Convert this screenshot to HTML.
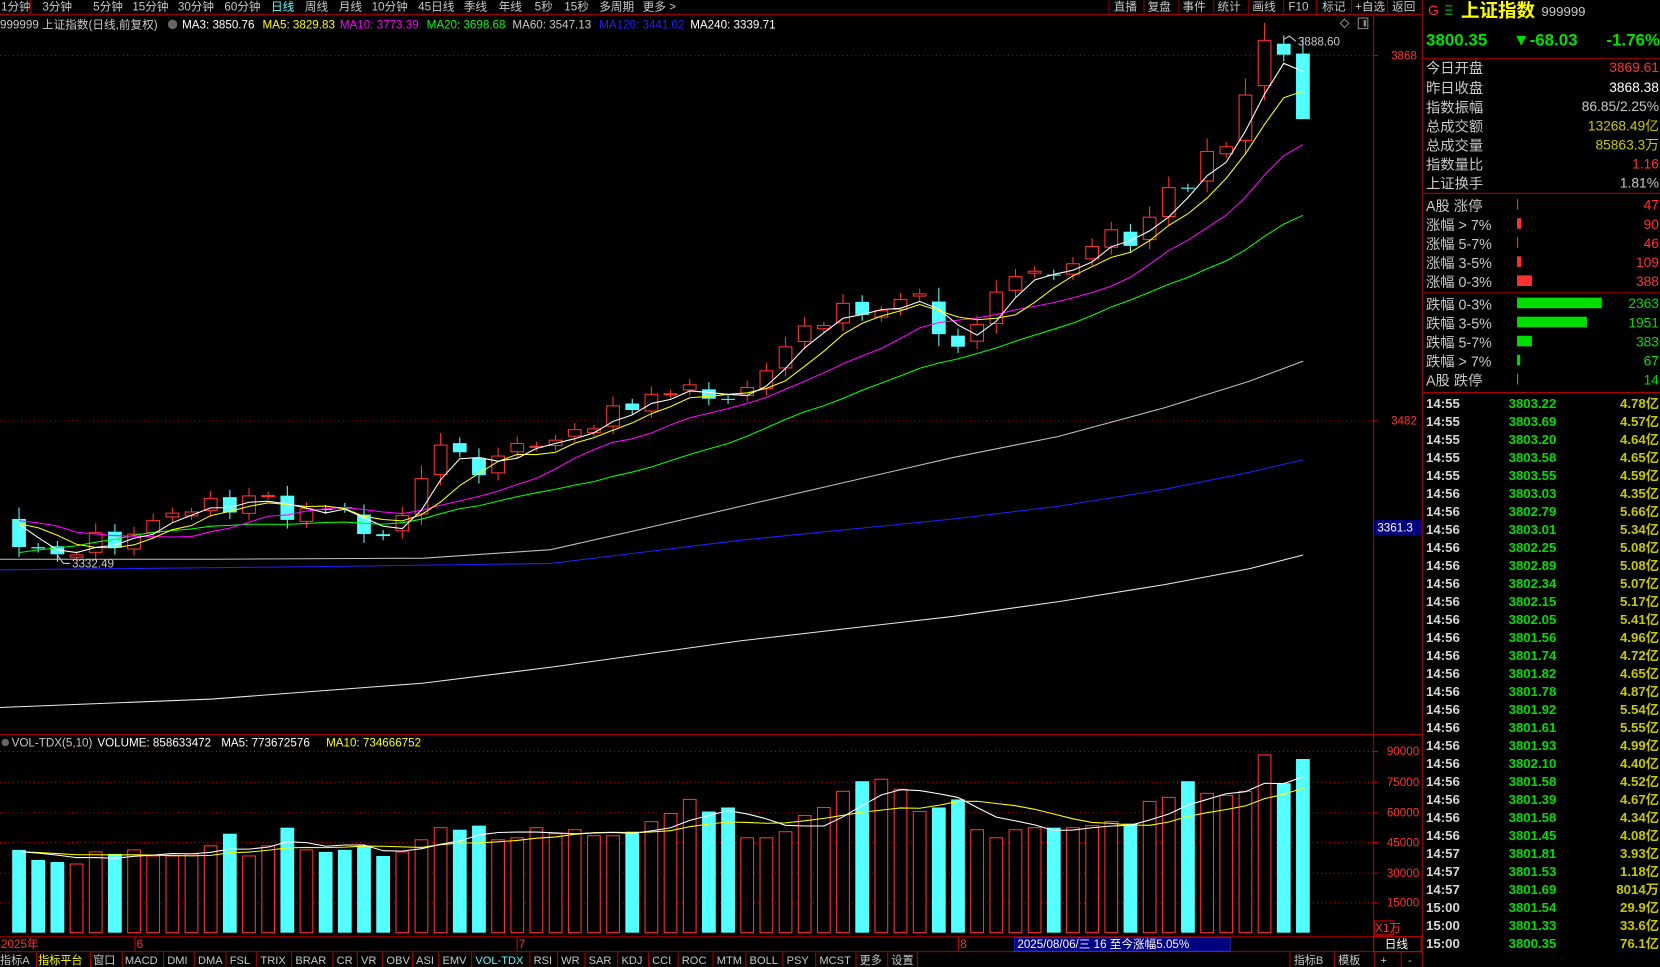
<!DOCTYPE html>
<html><head><meta charset="utf-8">
<style>
html,body{margin:0;padding:0;background:#000;overflow:hidden}
svg{display:block}
text{font-family:"Liberation Sans","Noto Sans CJK SC",sans-serif}
</style></head><body>
<svg id="s" width="1660" height="967" viewBox="0 0 1568 913" preserveAspectRatio="none" xmlns="http://www.w3.org/2000/svg">
<rect width="1568" height="913" fill="#000"/>
<g stroke="#a00" stroke-width="1" fill="none">
<line x1="0" y1="13.5" x2="1343" y2="13.5"/>
<line x1="1297.5" y1="13" x2="1297.5" y2="898"/>
<line x1="1343.5" y1="0" x2="1343.5" y2="913"/>
<line x1="0" y1="693.5" x2="1343" y2="693.5"/>
<line x1="0" y1="884.5" x2="1343" y2="884.5"/>
<line x1="0" y1="898.5" x2="1343" y2="898.5"/>
<line x1="1344" y1="55.5" x2="1568" y2="55.5"/>
<line x1="1344" y1="182.5" x2="1568" y2="182.5"/>
<line x1="1344" y1="276.5" x2="1568" y2="276.5"/>
<line x1="1344" y1="370.5" x2="1568" y2="370.5"/>
</g>
<g stroke="#c00" stroke-dasharray="1,3">
<line x1="0" y1="52.5" x2="1297" y2="52.5"/>
<line x1="0" y1="397.5" x2="1297" y2="397.5"/>
<line x1="0" y1="709.5" x2="1297" y2="709.5"/>
<line x1="0" y1="738.5" x2="1297" y2="738.5"/>
<line x1="0" y1="767.5" x2="1297" y2="767.5"/>
<line x1="0" y1="795.5" x2="1297" y2="795.5"/>
<line x1="0" y1="824.5" x2="1297" y2="824.5"/>
<line x1="0" y1="852.5" x2="1297" y2="852.5"/>
</g>
<g stroke="#c00">
<line x1="1297" y1="52.5" x2="1302" y2="52.5"/><line x1="1297" y1="397.5" x2="1302" y2="397.5"/>
<line x1="1297" y1="709.5" x2="1302" y2="709.5"/><line x1="1297" y1="738.5" x2="1302" y2="738.5"/>
<line x1="1297" y1="767.5" x2="1302" y2="767.5"/><line x1="1297" y1="795.5" x2="1302" y2="795.5"/>
<line x1="1297" y1="824.5" x2="1302" y2="824.5"/><line x1="1297" y1="852.5" x2="1302" y2="852.5"/>
</g>
<g id="ch"></g>

<g font-size="11" fill="#c8c8c8">
<text x="1" y="10">1分钟</text><text x="40" y="10">3分钟</text>
<text x="88" y="10">5分钟</text><text x="125" y="10">15分钟</text><text x="168" y="10">30分钟</text>
<text x="212" y="10">60分钟</text><text x="256" y="10" fill="#54ffff">日线</text><text x="288" y="10">周线</text>
<text x="320" y="10">月线</text><text x="351" y="10">10分钟</text><text x="395" y="10">45日线</text>
<text x="438" y="10">季线</text><text x="471" y="10">年线</text><text x="505" y="10">5秒</text>
<text x="533" y="10">15秒</text><text x="566" y="10">多周期</text><text x="607" y="10">更多 &gt;</text>
<text x="1052" y="10">直播</text><text x="1084" y="10">复盘</text><text x="1117" y="10">事件</text>
<text x="1150" y="10">统计</text><text x="1183" y="10">画线</text><text x="1217" y="10">F10</text>
<text x="1249" y="10">标记</text><text x="1280" y="10">+自选</text><text x="1315" y="10">返回</text>
</g>
<g stroke="#800"><line x1="1047.5" y1="0" x2="1047.5" y2="13"/><line x1="1080.5" y1="0" x2="1080.5" y2="13"/><line x1="1113.5" y1="0" x2="1113.5" y2="13"/><line x1="1146.5" y1="0" x2="1146.5" y2="13"/><line x1="1179.5" y1="0" x2="1179.5" y2="13"/><line x1="1212.5" y1="0" x2="1212.5" y2="13"/><line x1="1243.5" y1="0" x2="1243.5" y2="13"/><line x1="1276.5" y1="0" x2="1276.5" y2="13"/><line x1="1310.5" y1="0" x2="1310.5" y2="13"/><line x1="28.5" y1="0" x2="28.5" y2="13" stroke="#c00"/></g>

<g font-size="11" fill="#c8c8c8">
<text x="0" y="27">999999 上证指数(日线,前复权)</text>
<circle cx="163" cy="23" r="4.5" fill="#666"/>
<text x="172" y="27" fill="#fff">MA3: 3850.76</text>
<text x="248" y="27" fill="#ffff00">MA5: 3829.83</text>
<text x="321" y="27" fill="#ff00ff">MA10: 3773.39</text>
<text x="403" y="27" fill="#00ff00">MA20: 3698.68</text>
<text x="484" y="27" fill="#c8c8c8">MA60: 3547.13</text>
<text x="566" y="27" fill="#2020ff">MA120: 3441.02</text>
<text x="652" y="27" fill="#fff">MA240: 3339.71</text>
</g>
<path d="M1270 18 L1274 22 L1270 26 L1266 22 Z" fill="none" stroke="#888"/>
<rect x="1283" y="17" width="9" height="10" fill="none" stroke="#888"/><rect x="1288" y="19" width="2.5" height="6" fill="#888"/>

<g font-size="11" fill="#ff3232">
<text x="1314" y="56">3868</text><text x="1314" y="401">3482</text>
<text x="1310" y="713">90000</text><text x="1310" y="742">75000</text><text x="1310" y="771">60000</text>
<text x="1310" y="799">45000</text><text x="1310" y="828">30000</text><text x="1310" y="856">15000</text>
</g>
<rect x="1298" y="491" width="45" height="14" fill="#000080"/>
<text x="1301" y="502" font-size="11" fill="#fff">3361.3</text>
<rect x="1298.5" y="869.5" width="18" height="13" fill="none" stroke="#c00"/>
<text x="1299" y="880" font-size="11" fill="#ff3232">X1万</text>

<g font-size="11" fill="#c8c8c8">
<text x="1226" y="43">3888.60</text>
<text x="68" y="536">3332.49</text>
</g>
<path d="M1213 37 L1218 34 L1224 39" stroke="#c8c8c8" fill="none"/>
<path d="M54 524 L60 532 L66 532" stroke="#c8c8c8" fill="none"/>

<g font-size="11">
<circle cx="5" cy="701" r="3.5" fill="#666"/>
<text x="11" y="705" fill="#c8c8c8">VOL-TDX(5,10)</text>
<text x="92" y="705" fill="#fff">VOLUME: 858633472</text>
<text x="209" y="705" fill="#fff">MA5: 773672576</text>
<text x="308" y="705" fill="#ffff00">MA10: 734666752</text>
</g>

<g font-size="11" fill="#ff3232">
<text x="1" y="895">2025年</text><text x="129" y="895">6</text><text x="490" y="895">7</text><text x="907" y="895">8</text>
</g>
<g stroke="#c00"><line x1="127.5" y1="885" x2="127.5" y2="898"/><line x1="488.5" y1="885" x2="488.5" y2="898"/><line x1="905.5" y1="885" x2="905.5" y2="898"/></g>
<rect x="958" y="885" width="204" height="13" fill="#000080" stroke="#44f" stroke-width="0.5"/>
<text x="961" y="895" font-size="11" fill="#fff">2025/08/06/三 16 至今涨幅5.05%</text>
<rect x="1297.5" y="884.5" width="45" height="14" fill="none" stroke="#c00"/>
<text x="1308" y="895" font-size="11" fill="#fff">日线</text>

<g font-size="10.5" fill="#c8c8c8">
<text x="0" y="910">指标A</text><text x="36" y="910" fill="#ffff00">指标平台</text><text x="88" y="910">窗口</text>
<text x="118" y="910">MACD</text><text x="158" y="910">DMI</text><text x="187" y="910">DMA</text>
<text x="217" y="910">FSL</text><text x="246" y="910">TRIX</text><text x="279" y="910">BRAR</text>
<text x="318" y="910">CR</text><text x="341" y="910">VR</text><text x="365" y="910">OBV</text>
<text x="393" y="910">ASI</text><text x="418" y="910">EMV</text><text x="449" y="910" fill="#54ffff">VOL-TDX</text>
<text x="504" y="910">RSI</text><text x="530" y="910">WR</text><text x="556" y="910">SAR</text>
<text x="587" y="910">KDJ</text><text x="616" y="910">CCI</text><text x="644" y="910">ROC</text>
<text x="677" y="910">MTM</text><text x="708" y="910">BOLL</text><text x="743" y="910">PSY</text>
<text x="774" y="910">MCST</text><text x="812" y="910">更多</text><text x="842" y="910">设置</text>
<text x="1222" y="910">指标B</text><text x="1264" y="910">模板</text><text x="1304" y="910">+</text><text x="1330" y="910">-</text>
</g>
<g stroke="#a00" id="sep"></g>

<text x="1349" y="14" font-size="13" fill="#ff3232">G</text>
<g stroke="#00cc00"><line x1="1365" y1="5.5" x2="1372" y2="5.5"/><line x1="1365" y1="9.5" x2="1372" y2="9.5"/><line x1="1365" y1="13.5" x2="1372" y2="13.5"/></g>
<text x="1380" y="16" font-size="17.5" fill="#ffff00" font-weight="bold" textLength="70">上证指数</text>
<text x="1456" y="15" font-size="12.5" fill="#c8c8c8">999999</text>
<g font-size="16" font-weight="bold" fill="#00e000">
<text x="1347" y="43">3800.35</text>
<text x="1429" y="43">▼-68.03</text>
<text x="1568" y="43" text-anchor="end">-1.76%</text>
</g>
<g font-size="13.5" fill="#c8c8c8">
<text x="1347" y="69">今日开盘</text><text x="1347" y="88">昨日收盘</text><text x="1347" y="106">指数振幅</text>
<text x="1347" y="124">总成交额</text><text x="1347" y="142">总成交量</text><text x="1347" y="160">指数量比</text>
<text x="1347" y="178">上证换手</text>
</g>
<g font-size="13" text-anchor="end">
<text x="1567" y="68" fill="#ff3232">3869.61</text><text x="1567" y="87" fill="#fff">3868.38</text>
<text x="1567" y="105" fill="#c8c8c8">86.85/2.25%</text><text x="1567" y="123" fill="#c8c800">13268.49亿</text>
<text x="1567" y="141" fill="#c8c800">85863.3万</text><text x="1567" y="159" fill="#ff3232">1.16</text>
<text x="1567" y="177" fill="#c8c8c8">1.81%</text>
</g>
<g font-size="13.5" fill="#c8c8c8">
<text x="1347" y="199">A股 涨停</text><text x="1347" y="217">涨幅 &gt; 7%</text><text x="1347" y="235">涨幅 5-7%</text>
<text x="1347" y="253">涨幅 3-5%</text><text x="1347" y="271">涨幅 0-3%</text>
<text x="1347" y="292">跌幅 0-3%</text><text x="1347" y="310">跌幅 3-5%</text><text x="1347" y="328">跌幅 5-7%</text>
<text x="1347" y="346">跌幅 &gt; 7%</text><text x="1347" y="364">A股 跌停</text>
</g>
<g fill="#ff3232">
<rect x="1433" y="188" width="1" height="10"/><rect x="1433" y="206" width="4" height="10"/>
<rect x="1433" y="224" width="1" height="10"/><rect x="1433" y="242" width="4" height="10"/>
<rect x="1433" y="260" width="14" height="10"/>
</g>
<g fill="#00dd00">
<rect x="1433" y="281" width="80" height="10"/><rect x="1433" y="299" width="66" height="10"/>
<rect x="1433" y="317" width="14" height="10"/><rect x="1433" y="335" width="3" height="10"/>
<rect x="1433" y="353" width="1" height="10"/>
</g>
<g font-size="13" text-anchor="end">
<text x="1567" y="198" fill="#ff3232">47</text><text x="1567" y="216" fill="#ff3232">90</text>
<text x="1567" y="234" fill="#ff3232">46</text><text x="1567" y="252" fill="#ff3232">109</text>
<text x="1567" y="270" fill="#ff3232">388</text>
<text x="1567" y="291" fill="#00dd00">2363</text><text x="1567" y="309" fill="#00dd00">1951</text>
<text x="1567" y="327" fill="#00dd00">383</text><text x="1567" y="345" fill="#00dd00">67</text>
<text x="1567" y="363" fill="#00dd00">14</text>
</g>
<g id="ticks" font-size="12.5" font-weight="bold">
<text x="1347" y="385" fill="#d8d8d8">14:55</text><text x="1425" y="385" fill="#00dd00">3803.22</text><text x="1567" y="385" fill="#c8c800" text-anchor="end">4.78亿</text>
<text x="1347" y="402" fill="#d8d8d8">14:55</text><text x="1425" y="402" fill="#00dd00">3803.69</text><text x="1567" y="402" fill="#c8c800" text-anchor="end">4.57亿</text>
<text x="1347" y="419" fill="#d8d8d8">14:55</text><text x="1425" y="419" fill="#00dd00">3803.20</text><text x="1567" y="419" fill="#c8c800" text-anchor="end">4.64亿</text>
<text x="1347" y="436" fill="#d8d8d8">14:55</text><text x="1425" y="436" fill="#00dd00">3803.58</text><text x="1567" y="436" fill="#c8c800" text-anchor="end">4.65亿</text>
<text x="1347" y="453" fill="#d8d8d8">14:55</text><text x="1425" y="453" fill="#00dd00">3803.55</text><text x="1567" y="453" fill="#c8c800" text-anchor="end">4.59亿</text>
<text x="1347" y="470" fill="#d8d8d8">14:56</text><text x="1425" y="470" fill="#00dd00">3803.03</text><text x="1567" y="470" fill="#c8c800" text-anchor="end">4.35亿</text>
<text x="1347" y="487" fill="#d8d8d8">14:56</text><text x="1425" y="487" fill="#00dd00">3802.79</text><text x="1567" y="487" fill="#c8c800" text-anchor="end">5.66亿</text>
<text x="1347" y="504" fill="#d8d8d8">14:56</text><text x="1425" y="504" fill="#00dd00">3803.01</text><text x="1567" y="504" fill="#c8c800" text-anchor="end">5.34亿</text>
<text x="1347" y="521" fill="#d8d8d8">14:56</text><text x="1425" y="521" fill="#00dd00">3802.25</text><text x="1567" y="521" fill="#c8c800" text-anchor="end">5.08亿</text>
<text x="1347" y="538" fill="#d8d8d8">14:56</text><text x="1425" y="538" fill="#00dd00">3802.89</text><text x="1567" y="538" fill="#c8c800" text-anchor="end">5.08亿</text>
<text x="1347" y="555" fill="#d8d8d8">14:56</text><text x="1425" y="555" fill="#00dd00">3802.34</text><text x="1567" y="555" fill="#c8c800" text-anchor="end">5.07亿</text>
<text x="1347" y="572" fill="#d8d8d8">14:56</text><text x="1425" y="572" fill="#00dd00">3802.15</text><text x="1567" y="572" fill="#c8c800" text-anchor="end">5.17亿</text>
<text x="1347" y="589" fill="#d8d8d8">14:56</text><text x="1425" y="589" fill="#00dd00">3802.05</text><text x="1567" y="589" fill="#c8c800" text-anchor="end">5.41亿</text>
<text x="1347" y="606" fill="#d8d8d8">14:56</text><text x="1425" y="606" fill="#00dd00">3801.56</text><text x="1567" y="606" fill="#c8c800" text-anchor="end">4.96亿</text>
<text x="1347" y="623" fill="#d8d8d8">14:56</text><text x="1425" y="623" fill="#00dd00">3801.74</text><text x="1567" y="623" fill="#c8c800" text-anchor="end">4.72亿</text>
<text x="1347" y="640" fill="#d8d8d8">14:56</text><text x="1425" y="640" fill="#00dd00">3801.82</text><text x="1567" y="640" fill="#c8c800" text-anchor="end">4.65亿</text>
<text x="1347" y="657" fill="#d8d8d8">14:56</text><text x="1425" y="657" fill="#00dd00">3801.78</text><text x="1567" y="657" fill="#c8c800" text-anchor="end">4.87亿</text>
<text x="1347" y="674" fill="#d8d8d8">14:56</text><text x="1425" y="674" fill="#00dd00">3801.92</text><text x="1567" y="674" fill="#c8c800" text-anchor="end">5.54亿</text>
<text x="1347" y="691" fill="#d8d8d8">14:56</text><text x="1425" y="691" fill="#00dd00">3801.61</text><text x="1567" y="691" fill="#c8c800" text-anchor="end">5.55亿</text>
<text x="1347" y="708" fill="#d8d8d8">14:56</text><text x="1425" y="708" fill="#00dd00">3801.93</text><text x="1567" y="708" fill="#c8c800" text-anchor="end">4.99亿</text>
<text x="1347" y="725" fill="#d8d8d8">14:56</text><text x="1425" y="725" fill="#00dd00">3802.10</text><text x="1567" y="725" fill="#c8c800" text-anchor="end">4.40亿</text>
<text x="1347" y="742" fill="#d8d8d8">14:56</text><text x="1425" y="742" fill="#00dd00">3801.58</text><text x="1567" y="742" fill="#c8c800" text-anchor="end">4.52亿</text>
<text x="1347" y="759" fill="#d8d8d8">14:56</text><text x="1425" y="759" fill="#00dd00">3801.39</text><text x="1567" y="759" fill="#c8c800" text-anchor="end">4.67亿</text>
<text x="1347" y="776" fill="#d8d8d8">14:56</text><text x="1425" y="776" fill="#00dd00">3801.58</text><text x="1567" y="776" fill="#c8c800" text-anchor="end">4.34亿</text>
<text x="1347" y="793" fill="#d8d8d8">14:56</text><text x="1425" y="793" fill="#00dd00">3801.45</text><text x="1567" y="793" fill="#c8c800" text-anchor="end">4.08亿</text>
<text x="1347" y="810" fill="#d8d8d8">14:57</text><text x="1425" y="810" fill="#00dd00">3801.81</text><text x="1567" y="810" fill="#c8c800" text-anchor="end">3.93亿</text>
<text x="1347" y="827" fill="#d8d8d8">14:57</text><text x="1425" y="827" fill="#00dd00">3801.53</text><text x="1567" y="827" fill="#c8c800" text-anchor="end">1.18亿</text>
<text x="1347" y="844" fill="#d8d8d8">14:57</text><text x="1425" y="844" fill="#00dd00">3801.69</text><text x="1567" y="844" fill="#c8c800" text-anchor="end">8014万</text>
<text x="1347" y="861" fill="#d8d8d8">15:00</text><text x="1425" y="861" fill="#00dd00">3801.54</text><text x="1567" y="861" fill="#c8c800" text-anchor="end">29.9亿</text>
<text x="1347" y="878" fill="#d8d8d8">15:00</text><text x="1425" y="878" fill="#00dd00">3801.33</text><text x="1567" y="878" fill="#c8c800" text-anchor="end">33.6亿</text>
<text x="1347" y="895" fill="#d8d8d8">15:00</text><text x="1425" y="895" fill="#00dd00">3800.35</text><text x="1567" y="895" fill="#c8c800" text-anchor="end">76.1亿</text>
</g>
</svg>
<script>
(function(){
var NS='http://www.w3.org/2000/svg';
var sep=document.getElementById('sep');
[34,85,115,154,183,213,242,275,314,337,361,389,414,445,500,526,552,583,612,640,673,704,739,770,808,838,866,1218,1260,1298,1323].forEach(function(x){
 var l=document.createElementNS(NS,'line');l.setAttribute('x1',x+.5);l.setAttribute('x2',x+.5);l.setAttribute('y1',899);l.setAttribute('y2',913);sep.appendChild(l);});
var pre=[3276,3290,3297,3295,3288,3286,3279,3316,3343,3352,3342,3369,3375,3404,3381,3367,3368,3380,3388,3380];
var c=[3348.37,3346.84,3340.69,3339.93,3363.45,3347.49,
3361.98,3376.20,3384.10,3385.36,3399.77,3384.82,3402.32,3402.66,3377.00,3388.73,3387.40,3388.81,3362.11,3359.90,3381.58,3420.57,3455.97,3448.45,3424.23,3444.43,
3457.75,3454.79,3461.15,3472.32,3473.13,3497.48,3493.05,3509.68,3510.18,3519.65,3505.00,3503.78,3516.83,3534.48,3559.79,3581.86,3582.30,3605.73,3593.66,3597.94,3609.71,3615.72,3573.21,
3559.95,3583.31,3617.60,3633.99,3639.67,3635.13,3647.55,3665.92,3683.46,3666.44,3696.77,3728.03,3727.29,3766.21,3771.10,3825.76,3883.56,3868.38,3800.35];
var v=[41,36,35,34,40,39,41,38,38,39,43,49,38,43,52,41,40,41,43,38,40,46,52,51,53,46,47,52,49,51,48,48,50,55,59,66,60,62,47,47,50,58,62,70,75,76,71,60,62,66,51,47,51,52,52,52,53,55,54,65,67,75,69,68,70,88,74,86];
var all=pre.concat(c);
function Y(p){return 52+(3868-p)*0.8938}
function VY(k){return 880.6-k*1000*0.0019067}
function X(i){return 18+i*18.1}
var h='';
var N=c.length;
for(var i=0;i<N;i++){
 var pc=i?c[i-1]:3380.19, cl=c[i], o;
 if(i==0)o=3378;
 else if(i==N-1)o=3869.61;
 else if(i==N-2)o=3880;
 else o=pc+(cl-pc)*0.12+((i%3)-1)*3;
 var hi=Math.max(o,cl)+Math.abs(cl-pc)*0.25+4, lo=Math.min(o,cl)-Math.abs(cl-pc)*0.2-4;
 if(i==N-2)hi=3888.6; if(i==N-1){hi=3887;lo=3800.35}
 if(i==2)lo=3332.49;
 var isUp=cl>=o;
 var x=X(i), w=13, yt=Y(Math.max(o,cl)), yb=Y(Math.min(o,cl)); if(yb-yt<1)yb=yt+1;
 var col=isUp?'#ff3232':'#54ffff';
 h+='<line x1="'+x+'" x2="'+x+'" y1="'+Y(hi)+'" y2="'+Y(lo)+'" stroke="'+col+'"/>';
 if(isUp)h+='<rect x="'+(x-w/2+.5)+'" y="'+yt+'" width="'+(w-1)+'" height="'+(yb-yt)+'" fill="#000" stroke="#ff3232"/>';
 else h+='<rect x="'+(x-w/2)+'" y="'+yt+'" width="'+w+'" height="'+(yb-yt)+'" fill="#54ffff"/>';
 var vt=VY(v[i]);
 if(isUp)h+='<rect x="'+(x-w/2+.5)+'" y="'+vt+'" width="'+(w-1)+'" height="'+(880.6-vt)+'" fill="#000" stroke="#ff3232"/>';
 else h+='<rect x="'+(x-w/2)+'" y="'+vt+'" width="'+w+'" height="'+(880.6-vt)+'" fill="#54ffff"/>';
}
function ma(n,col){
 var pts=[];
 for(var i=0;i<N;i++){var k=i+pre.length,s=0;for(var j=0;j<n;j++)s+=all[k-j];pts.push(X(i).toFixed(1)+','+Y(s/n).toFixed(1));}
 return '<polyline fill="none" stroke="'+col+'" points="'+pts.join(' ')+'"/>';
}
function line(p,col){return '<polyline fill="none" stroke="'+col+'" points="'+p+'"/>';}
var lines='';
lines+=line('0,668 200,660 400,645 520,630 700,605 900,582 1000,568 1100,552 1180,537 1231,524','#e8e8e8');
lines+=line('0,538 300,535 520,532 700,510 900,490 1000,478 1100,462 1180,446 1231,434','#2020ff');
lines+=line('0,528 200,528 400,527 520,519 600,501 700,478 800,455 900,432 1000,412 1100,385 1180,360 1231,341','#c0c0c0');
lines+=ma(20,'#00ff00')+ma(10,'#ff00ff')+ma(5,'#ffff00')+ma(3,'#ffffff');
var vall=[40,40,40,40,40,40,40,40,40,40].concat(v);
function vma(n,col){var pts=[];for(var i=0;i<N;i++){var k=i+10,s=0;for(var j=0;j<n;j++)s+=vall[k-j];pts.push(X(i).toFixed(1)+','+VY(s/n).toFixed(1));}return '<polyline fill="none" stroke="'+col+'" points="'+pts.join(' ')+'"/>';}
var vl=vma(10,'#ffff00')+vma(5,'#ffffff');
document.getElementById('ch').innerHTML=h+lines+vl;
})();
</script>
</body></html>
